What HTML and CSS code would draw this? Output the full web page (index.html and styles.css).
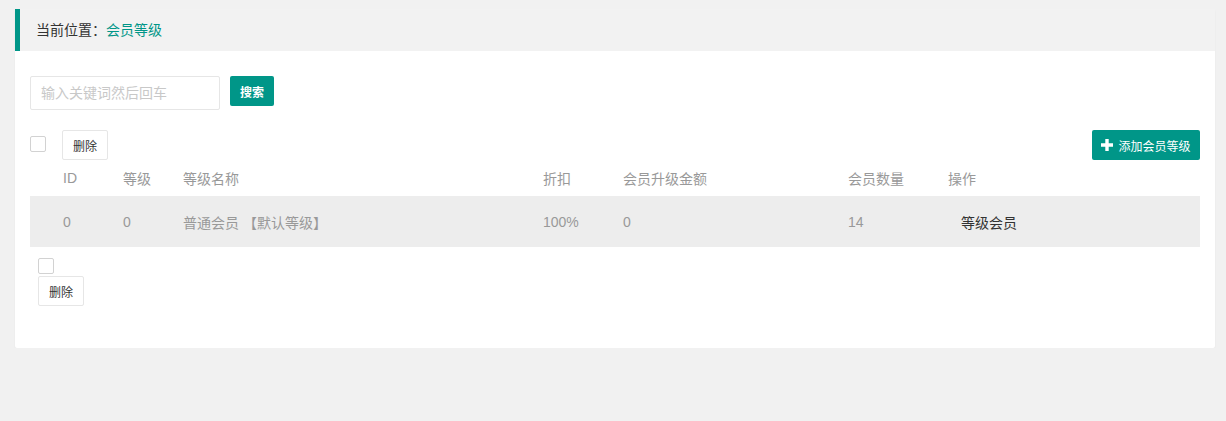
FILE: index.html
```html
<!DOCTYPE html>
<html lang="zh-CN">
<head>
<meta charset="utf-8">
<title>会员等级</title>
<link rel="stylesheet" href="styles.css">
</head>
<body>
<div class="card">
  <div class="crumb">当前位置：<span class="crumb-cur">会员等级</span></div>
  <div class="card-body">
    <div class="search-row">
      <input class="search-input" type="text" placeholder="输入关键词然后回车">
      <button class="btn btn-primary btn-search">搜索</button>
    </div>
    <div class="toolbar">
      <span class="checkbox"></span>
      <button class="btn btn-plain">删除</button>
      <button class="btn btn-primary btn-add"><svg class="plus" viewBox="0 0 12 12" width="12" height="12"><path d="M4.3 0h3.4v4.3H12v3.4H7.7V12H4.3V7.7H0V4.3h4.3z" fill="#fff"/></svg>添加会员等级</button>
    </div>
    <div class="table">
      <div class="row head">
        <div>ID</div><div>等级</div><div>等级名称</div><div>折扣</div><div>会员升级金额</div><div>会员数量</div><div>操作</div>
      </div>
      <div class="row data">
        <div>0</div><div>0</div><div>普通会员 【默认等级】</div><div>100%</div><div>0</div><div>14</div><div class="op">等级会员</div>
      </div>
    </div>
    <div class="footer">
      <span class="checkbox"></span>
      <button class="btn btn-plain">删除</button>
    </div>
  </div>
</div>
</body>
</html>
```
FILE: styles.css
```css
* { box-sizing: border-box; }
body {
  margin: 0;
  background: #f1f1f1;
  font-family: "Liberation Sans", "Noto Sans CJK SC", sans-serif;
  font-size: 14px;
  color: #333;
}
.card {
  margin: 9px 11px 0 15px;
  background: #fff;
  box-shadow: 0 1px 2px rgba(0,0,0,0.05);
  border-radius: 2px;
}
.crumb {
  height: 42px;
  line-height: 42px;
  background: #f2f2f2;
  border-left: 5px solid #009688;
  padding-left: 16px;
  color: #333;
}
.crumb-cur { color: #009688; }
.card-body {
  padding: 25px 15px 42px;
}
.search-row {
  display: flex;
  align-items: flex-start;
  gap: 10px;
}
.search-input {
  width: 190px;
  height: 34px;
  border: 1px solid #e6e6e6;
  border-radius: 2px;
  padding: 0 10px;
  font-family: inherit;
  font-size: 14px;
  outline: none;
}
.search-input::placeholder { color: #c8c8c8; }
.btn {
  height: 30px;
  border-radius: 2px;
  font-family: inherit;
  font-size: 12px;
  cursor: pointer;
  padding: 0 10px;
  display: inline-flex;
  align-items: center;
  justify-content: center;
}
.btn-primary {
  background: #009688;
  border: none;
  color: #fff;
}
.btn-search { width: 44px; font-weight: bold; }
.btn-plain {
  background: #fff;
  border: 1px solid #e6e6e6;
  color: #333;
  width: 46px;
}
.toolbar {
  margin-top: 20px;
  display: flex;
  align-items: flex-start;
}
.toolbar .checkbox { margin-top: 6px; margin-right: 16px; }
.btn-add { margin-left: auto; width: 108px; padding: 0; }
.plus { margin-right: 5px; }
.checkbox {
  display: inline-block;
  width: 16px;
  height: 16px;
  border: 1px solid #d2d2d2;
  border-radius: 2px;
  background: #fff;
}
.table { margin-top: 0; }
.row {
  display: grid;
  grid-template-columns: 60px 60px 360px 80px 225px 100px 1fr;
  padding-left: 33px;
  align-items: center;
  color: #999;
}
.row.head { height: 36px; }
.row.data { height: 51px; background: #ededed; }
.row .op { color: #333; padding-left: 13px; }
.footer {
  margin-top: 11px;
  padding-left: 8px;
  display: flex;
  flex-direction: column;
  align-items: flex-start;
  gap: 2px;
}
```
